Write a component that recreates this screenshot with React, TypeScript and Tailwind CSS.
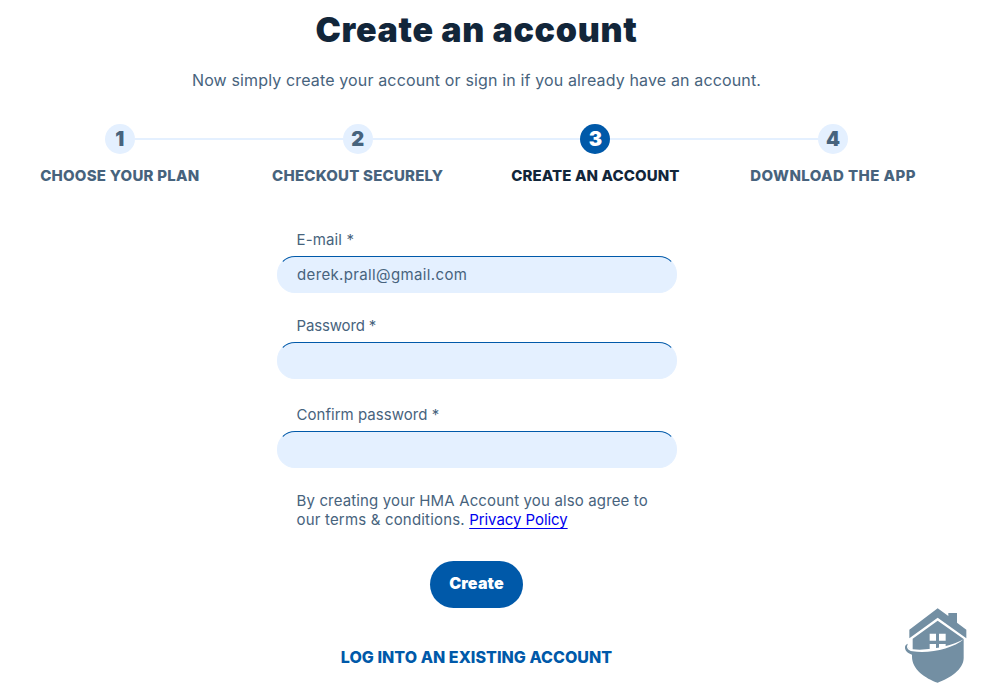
const steps = [
  { n: 1, label: "CHOOSE YOUR PLAN", tracking: "tracking-[0.25px]", active: false },
  { n: 2, label: "CHECKOUT SECURELY", tracking: "tracking-[0.22px]", active: false },
  { n: 3, label: "CREATE AN ACCOUNT", tracking: "tracking-[0.1px]", active: true },
  { n: 4, label: "DOWNLOAD THE APP", tracking: "tracking-[0.42px]", active: false },
];

const fields = [
  { label: "E-mail *", value: "derek.prall@gmail.com", type: "text", tracking: "tracking-[0.15px]", gap: "" },
  { label: "Password *", value: "", type: "password", tracking: "tracking-[-0.15px]", gap: "mt-[23px]" },
  { label: "Confirm password *", value: "", type: "password", tracking: "tracking-[0.03px]", gap: "mt-[26px]" },
];

function Stepper() {
  return (
    <ol className="mt-8 ml-px grid w-[951px] grid-cols-4">
      {steps.map((s, i) => (
        <li key={s.n} className="flex flex-col items-center">
          <div className="flex w-full items-center">
            <span className={`h-0.5 flex-1 ${i > 0 ? "bg-[#e4f0ff]" : ""}`} />
            <span
              className={`flex size-[30px] items-center justify-center rounded-full text-[20px] leading-none font-black ${
                s.active ? "bg-[#0059a9] text-white" : "bg-[#e4f0ff] text-[#47637d]"
              }`}
            >
              {s.n}
            </span>
            <span className={`h-0.5 flex-1 ${i < 3 ? "bg-[#e4f0ff]" : ""}`} />
          </div>
          <span
            className={`mt-3 text-[15px] leading-5 font-extrabold whitespace-nowrap ${s.tracking} ${
              s.active ? "text-[#12263a]" : "text-[#47637d]"
            }`}
          >
            {s.label}
          </span>
        </li>
      ))}
    </ol>
  );
}

function ShieldHouse() {
  return (
    <svg className="fixed top-[600px] left-[890px]" width="99" height="100" viewBox="0 0 297 300" aria-hidden="true">
      <path fill="#738fa3" d="M143 25L175 48V39H201V68L229 89V115L143 53L58 115V89Z" />
      <path
        fill="#738fa3"
        d="M143 62L221 117V174C221 208 180 235 143 248C106 235 66 208 66 170V164C52 159 44 151 45 141C45 136 49 133 54 131C51 138 53 145 68 150V116Z"
      />
      <path fill="#fff" d="M119 101H138V122H119ZM147 101H167V122H147ZM119 132H138V150H119ZM147 132H167V142L147 148Z" />
      <path fill="#fff" d="M54 131C47 142 53 151 68 154C120 162 190 145 221 118C187 138 120 153 68 148C57 146 51 140 54 131Z" />
    </svg>
  );
}

export default function App() {
  return (
    <main className="h-[700px] w-[989px] overflow-hidden bg-white font-['Inter','Liberation_Sans',sans-serif] text-[#47637d]">
      <div className="flex w-[953px] flex-col items-center">
        <h1 className="mt-2 text-[34px] leading-[44px] font-black tracking-[0.68px] text-[#12263a]">
          Create an account
        </h1>
        <p className="mt-4 text-[16px] leading-6 tracking-[0.14px] whitespace-nowrap">
          Now simply create your account or sign in if you already have an account.
        </p>
      </div>
      <Stepper />
      <form className="mt-11 ml-[277px] flex w-[400px] flex-col">
        {fields.map((f) => (
          <label key={f.label} className={`flex flex-col ${f.gap}`}>
            <span className={`pl-[19.5px] text-[15px] leading-5 ${f.tracking}`}>{f.label}</span>
            <input
              type={f.type}
              defaultValue={f.value}
              className="mt-1.5 h-[37px] rounded-[18px] border border-[#e4f0ff] border-t-[#0059a9] bg-[#e4f0ff] px-[19px] text-[15px] tracking-[0.36px] outline-none"
            />
          </label>
        ))}
        <p className="mt-[23px] pl-[19.5px] text-[15px] leading-[19px] whitespace-nowrap">
          <span className="tracking-[0.14px]">By creating your HMA Account you also agree to</span>
          <br />
          <span className="tracking-[0.18px]">our terms &amp; conditions. </span>
          <a href="#" className="tracking-[-0.06px] text-[#0000ee] underline underline-offset-[3px]">
            Privacy Policy
          </a>
        </p>
        <button
          type="button"
          className="mt-8 ml-[153px] h-[47px] w-[93px] rounded-full bg-[#0059a9] pb-[3px] text-[16px] font-black tracking-[0.15px] text-white"
        >
          Create
        </button>
        <a href="#" className="mt-[39px] mr-px self-center text-[16px] leading-5 font-extrabold tracking-[0.04px] text-[#0059a9]">
          LOG INTO AN EXISTING ACCOUNT
        </a>
      </form>
      <ShieldHouse />
    </main>
  );
}
